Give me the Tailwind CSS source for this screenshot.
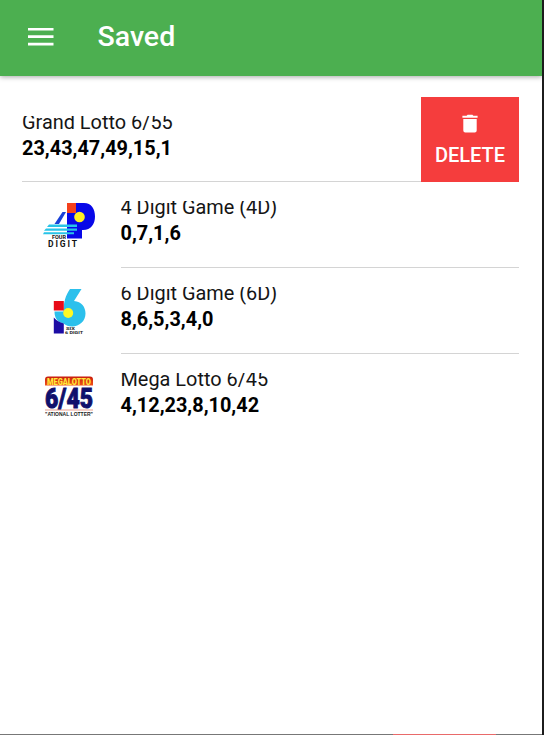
<!DOCTYPE html>
<html lang="en">
<head>
<meta charset="utf-8">
<title>Saved</title>
<script src="https://cdn.jsdelivr.net/npm/@tailwindcss/browser@4"></script>
</head>
<body class="bg-white">
<div class="flex h-[735px] w-[544px] flex-col overflow-hidden border-r-2 border-[#1c1c1c] bg-white font-[Roboto,sans-serif] text-[#151515]">
  <header class="z-10 flex h-[76px] shrink-0 items-center bg-[#4caf50] pb-0.5 pl-7 text-white shadow-[0_1px_5px_rgba(0,0,0,0.35)]">
    <svg class="h-[18px] w-[26px]" viewBox="0 0 26 18" fill="#fff"><path d="M0 0h25.5v2.6H0zM0 7.3h25.5v2.6H0zM0 14.8h25.5v2.6H0z"/></svg>
    <h1 class="ml-[43.5px] text-[28.5px] font-medium leading-none">Saved</h1>
  </header>

  <main class="flex flex-1 flex-col pt-[21px] pl-[22px] pr-[23px]">
    <section class="flex h-[85px] border-b border-[#d4d4d4]">
      <div class="flex-1 pt-[19px]">
        <p class="h-5 overflow-hidden whitespace-nowrap text-[19.9px] leading-[13px]">Grand Lotto 6/55</p>
        <p class="pt-px text-[19.9px] font-bold leading-[23px] text-black">23,43,47,49,15,1</p>
      </div>
      <button class="flex h-[84.5px] w-[98px] flex-col items-center bg-[#f53d3d] pt-[17px] text-white">
        <svg class="h-[19px] w-4" viewBox="0 0 16 19" fill="#fff"><path d="M1.3 5h13.400v11.600a2 2 0 0 1-2 2H3.300a2 2 0 0 1-2-2zM.4 1.800h4.200L5.600.7h4.800l1 1.100h4.200v2H.4z"/></svg>
        <span class="mt-[11px] text-[20px] font-medium leading-[23px]">DELETE</span>
      </button>
    </section>

    <section class="flex h-[86px]">
      <svg class="mt-[17px] ml-[20px] h-[52px] w-[54px] shrink-0" viewBox="42 199 54 52">
        <path d="M67 203h17c7.500 0 11 6 11 13.500s-4 13.500-12 13.500h-1v8.500H67z" fill="#0808e8"/>
        <path d="M67 203h9v10h-9z" fill="#f4401c"/>
        <circle cx="79.500" cy="217" r="5.300" fill="#ffee24"/>
        <path d="M62.500 212h3.500l-7 12h-4.500z" fill="#1840d8"/>
        <path d="M49 224.500h28v2.500H47zM46 228.500h31v2.300H44zM44 232.200h30v2H43z" fill="#28c4e8"/>
        <text x="52" y="239.300" textLength="14" lengthAdjust="spacingAndGlyphs" font-family="Roboto" font-size="5" font-weight="700" fill="#111">FOUR</text>
        <text x="48" y="247.300" textLength="29" font-family="Roboto" font-size="8.500" font-weight="700" fill="#111">DIGIT</text>
      </svg>
      <div class="ml-[24.5px] flex-1 border-b border-[#d4d4d4] pt-[19px]">
        <p class="h-5 overflow-hidden whitespace-nowrap text-[19.9px] leading-[13px]">4 Digit Game (4D)</p>
        <p class="pt-px text-[19.9px] font-bold leading-[23px] text-black">0,7,1,6</p>
      </div>
    </section>

    <section class="flex h-[85.5px]">
      <svg class="mt-[16px] ml-[20px] h-[52px] w-[54px] shrink-0" viewBox="42 284 54 52">
        <path d="M70 289H81.500L74 301C81.500 301.500 85.500 307 85.500 313.500c0 7.500-6 13-13.500 13-3.500 0-6-1-8.500-3-6-1.500-9-5-9-12h9c0-9 2-16 6.500-22.500z" fill="#2cc0ec"/>
        <path d="M53.800 301h10v9.500h-10z" fill="#e80c18"/>
        <path d="M53.800 317.500q4 4.500 10 6v10h-10z" fill="#1c0ca4"/>
        <circle cx="68.200" cy="313" r="5" fill="#fff824"/>
        <text x="66" y="329.600" textLength="9" lengthAdjust="spacingAndGlyphs" font-family="Roboto" font-size="3.500" font-weight="700" fill="#222">SIX</text>
        <text x="65" y="333.500" textLength="18" lengthAdjust="spacingAndGlyphs" font-family="Roboto" font-size="4" font-weight="700" fill="#222">6 DIGIT</text>
      </svg>
      <div class="ml-[24.5px] flex-1 border-b border-[#d4d4d4] pt-[19px]">
        <p class="h-5 overflow-hidden whitespace-nowrap text-[19.9px] leading-[13px]">6 Digit Game (6D)</p>
        <p class="pt-px text-[19.9px] font-bold leading-[23px] text-black">8,6,5,3,4,0</p>
      </div>
    </section>

    <section class="flex h-[85px]">
      <svg class="mt-[16.5px] ml-[20px] h-[52px] w-[54px] shrink-0" viewBox="42 370 54 52">
        <defs><linearGradient id="band" x1="0" x2="0" y1="0" y2="1"><stop offset="0" stop-color="#c81c0c"/><stop offset="1" stop-color="#f05018"/></linearGradient></defs>
        <path d="M48 376.500h42a3 3 0 0 1 3 3v6H45v-6a3 3 0 0 1 3-3z" fill="url(#band)"/>
        <text x="47" y="384.500" textLength="44" lengthAdjust="spacingAndGlyphs" font-family="Roboto" font-size="9" font-weight="900" fill="#ffe83c">MEGALOTTO</text>
        <text x="45" y="407.800" textLength="48" lengthAdjust="spacingAndGlyphs" font-family="Roboto" font-size="28.500" font-weight="900" fill="#10106c" stroke="#10106c" stroke-width=".9">6/45</text>
        <path d="M45 409.500h48v1H45z" fill="#e8a090"/>
        <text x="45" y="416" textLength="48" lengthAdjust="spacingAndGlyphs" font-family="Liberation Sans" font-size="6" font-weight="700" fill="#222">"ATIONAL LOTTER"</text>
      </svg>
      <div class="ml-[24.5px] flex-1 pt-[19px]">
        <p class="h-5 overflow-hidden whitespace-nowrap text-[19.9px] leading-[13px]">Mega Lotto 6/45</p>
        <p class="text-[19.9px] font-bold leading-[23px] text-black pt-px">4,12,23,8,10,42</p>
      </div>
    </section>
  </main>
  <footer class="h-px shrink-0 bg-[#777] pl-[393px]"><div class="h-px w-[103px] bg-[#e96a6a]"></div></footer>
</div>
</body>
</html>
